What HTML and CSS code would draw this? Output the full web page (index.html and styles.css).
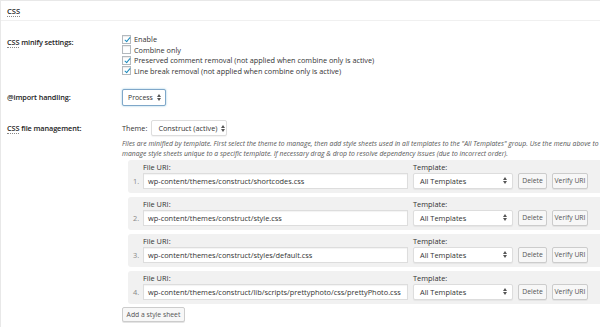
FILE: index.html
```html
<!DOCTYPE html>
<html>
<head>
<meta charset="utf-8">
<link rel="stylesheet" href="styles.css">
</head>
<body>
<div class="page">
  <div class="section-head"><abbr>CSS</abbr></div>
  <div class="form">
    <div class="row row-minify">
      <div class="th"><abbr>CSS</abbr> minify settings:</div>
      <div class="td checks">
        <label class="check"><span class="cb on"></span>Enable</label>
        <label class="check"><span class="cb"></span>Combine only</label>
        <label class="check"><span class="cb on"></span>Preserved comment removal (not applied when combine only is active)</label>
        <label class="check"><span class="cb on"></span>Line break removal (not applied when combine only is active)</label>
      </div>
    </div>
    <div class="row row-import">
      <div class="th">@import handling:</div>
      <div class="td"><span class="select sel-process">Process<span class="arrows"></span></span></div>
    </div>
    <div class="row row-files">
      <div class="th"><abbr>CSS</abbr> file management:</div>
      <div class="td">
        <div class="theme-line">Theme: <span class="select sel-theme">Construct (active)<span class="arrows"></span></span></div>
        <p class="desc">Files are minified by template. First select the theme to manage, then add style sheets used in all templates to the "All Templates" group. Use the menu above to<br>manage style sheets unique to a specific template. If necessary drag &amp; drop to resolve dependency issues (due to incorrect order).</p>
        <ol class="sheets">
          <li class="sheet">
            <div class="labels"><span class="l-uri">File URI:</span><span class="l-tpl">Template:</span></div>
            <div class="fields"><span class="num">1.</span><span class="input">wp-content/themes/construct/shortcodes.css</span><span class="select sel-tpl">All Templates<span class="arrows"></span></span><span class="btn b-del">Delete</span><span class="btn b-ver">Verify URI</span></div>
          </li>
          <li class="sheet">
            <div class="labels"><span class="l-uri">File URI:</span><span class="l-tpl">Template:</span></div>
            <div class="fields"><span class="num">2.</span><span class="input">wp-content/themes/construct/style.css</span><span class="select sel-tpl">All Templates<span class="arrows"></span></span><span class="btn b-del">Delete</span><span class="btn b-ver">Verify URI</span></div>
          </li>
          <li class="sheet">
            <div class="labels"><span class="l-uri">File URI:</span><span class="l-tpl">Template:</span></div>
            <div class="fields"><span class="num">3.</span><span class="input">wp-content/themes/construct/styles/default.css</span><span class="select sel-tpl">All Templates<span class="arrows"></span></span><span class="btn b-del">Delete</span><span class="btn b-ver">Verify URI</span></div>
          </li>
          <li class="sheet">
            <div class="labels"><span class="l-uri">File URI:</span><span class="l-tpl">Template:</span></div>
            <div class="fields"><span class="num">4.</span><span class="input">wp-content/themes/construct/lib/scripts/prettyphoto/css/prettyPhoto.css</span><span class="select sel-tpl">All Templates<span class="arrows"></span></span><span class="btn b-del">Delete</span><span class="btn b-ver">Verify URI</span></div>
          </li>
        </ol>
        <span class="btn b-add">Add a style sheet</span>
      </div>
    </div>
  </div>
</div>
</body>
</html>
```

FILE: styles.css
```css
* { box-sizing: border-box; }
html, body { margin: 0; padding: 0; background: #fff; }
body {
  font-family: "Open Sans", "Noto Sans", sans-serif;
  font-size: 7.3px;
  color: #333;
  width: 600px;
  height: 327px;
  overflow: hidden;
}
.page {
  border-top: 1px solid #e8e8e8;
  border-left: 1px solid #e8e8e8;
  height: 327px;
  overflow: hidden;
}
abbr {
  text-decoration: none;
  border-bottom: 1px dotted #888;
}
.section-head {
  height: 20px;
  padding: 4px 0 0 6px;
  font-size: 7.6px;
  font-weight: 600;
  color: #222;
  border-bottom: 1px solid #f0f0f0;
  line-height: 12px;
}
.form { padding-left: 6px; }
.row { display: flex; }
.th {
  width: 115px;
  flex-shrink: 0;
  font-weight: 600;
  color: #222;
  line-height: 11px;
  letter-spacing: -0.1px;
}
.td { flex: 1; min-width: 0; }
.row-minify { margin-top: 13px; }
.row-minify .th { padding-top: 3px; }
.checks { display: flex; flex-direction: column; }
.check {
  display: flex;
  align-items: center;
  height: 10.5px;
  line-height: 10px;
  color: #333;
  white-space: nowrap;
}
.cb {
  width: 9px;
  height: 9px;
  border: 1px solid #b4b9be;
  background: #fff;
  margin-right: 3px;
  position: relative;
  flex-shrink: 0;
  box-shadow: inset 0 1px 1px rgba(0,0,0,0.08);
}
.cb.on::after {
  content: "";
  position: absolute;
  left: 2.5px;
  top: 0px;
  width: 2px;
  height: 5px;
  border-right: 1.5px solid #1e8cbe;
  border-bottom: 1.5px solid #1e8cbe;
  transform: rotate(40deg);
}
.row-import { margin-top: 12px; align-items: center; height: 18px; }
.select {
  display: inline-flex;
  align-items: center;
  height: 16px;
  border: 1px solid #ddd;
  border-radius: 2px;
  background: #fff;
  padding: 0 5px 0 6px;
  color: #333;
  position: relative;
  white-space: nowrap;
  box-shadow: 0 1px 1px rgba(0,0,0,0.05);
}
.arrows {
  margin-left: auto;
  width: 4px;
  height: 7px;
  position: relative;
  flex-shrink: 0;
}
.arrows::before, .arrows::after {
  content: "";
  position: absolute;
  left: 0;
  border-left: 2px solid transparent;
  border-right: 2px solid transparent;
}
.arrows::before { top: 0; border-bottom: 3px solid #555; }
.arrows::after { bottom: 0; border-top: 3px solid #555; }
.sel-process {
  width: 44px;
  height: 17px;
  padding: 0 4px 0 5px;
  gap: 3px;
  font-size: 6.9px;
  border-color: #7fa7c9;
  box-shadow: 0 0 2px rgba(30,140,190,0.5);
}
.row-files { margin-top: 14px; }
.row-files .th { padding-top: 2.5px; }
.theme-line { display: flex; align-items: center; height: 16px; color: #333; }
.sel-theme { margin-left: 4px; width: 76px; gap: 4px; }
.desc {
  margin: 2.5px 0 0 0;
  font-style: italic;
  font-size: 6.8px;
  line-height: 10.5px;
  color: #555;
  white-space: nowrap;
}
.sheets {
  list-style: none;
  margin: 0 0 0 6px;
  padding: 0;
  display: flex;
  flex-direction: column;
  gap: 4px;
}
.sheet {
  height: 33px;
  background: #f1f1f1;
  border-radius: 3px 0 0 3px;
  padding: 2px 0 0 5px;
  width: 500px;
}
.labels { display: flex; height: 10px; line-height: 10px; color: #333; font-size: 7.4px; }
.l-uri { margin-left: 10px; width: 270px; }
.fields { display: flex; align-items: center; margin-top: 1px; height: 16px; font-size: 7.4px; }
.num { width: 10px; color: #888; flex-shrink: 0; }
.input {
  width: 265px;
  flex-shrink: 0;
  height: 16px;
  line-height: 14px;
  border: 1px solid #ddd;
  background: #fff;
  padding: 0 4px;
  color: #333;
  white-space: nowrap;
  box-shadow: inset 0 1px 1px rgba(0,0,0,0.05);
}
.sel-tpl { margin-left: 5px; width: 100px; flex-shrink: 0; }
.btn {
  display: inline-flex;
  align-items: center;
  justify-content: center;
  height: 16px;
  border: 1px solid #ccc;
  border-radius: 2px;
  background: #f7f7f7;
  color: #555;
  font-size: 6.8px;
  box-shadow: 0 1px 0 #e4e4e4;
  white-space: nowrap;
  flex-shrink: 0;
}
.b-del { margin-left: 5px; width: 29px; }
.b-ver { margin-left: 5px; width: 36px; }
.b-add { margin-top: 3px; height: 15px; width: 63px; }
```
